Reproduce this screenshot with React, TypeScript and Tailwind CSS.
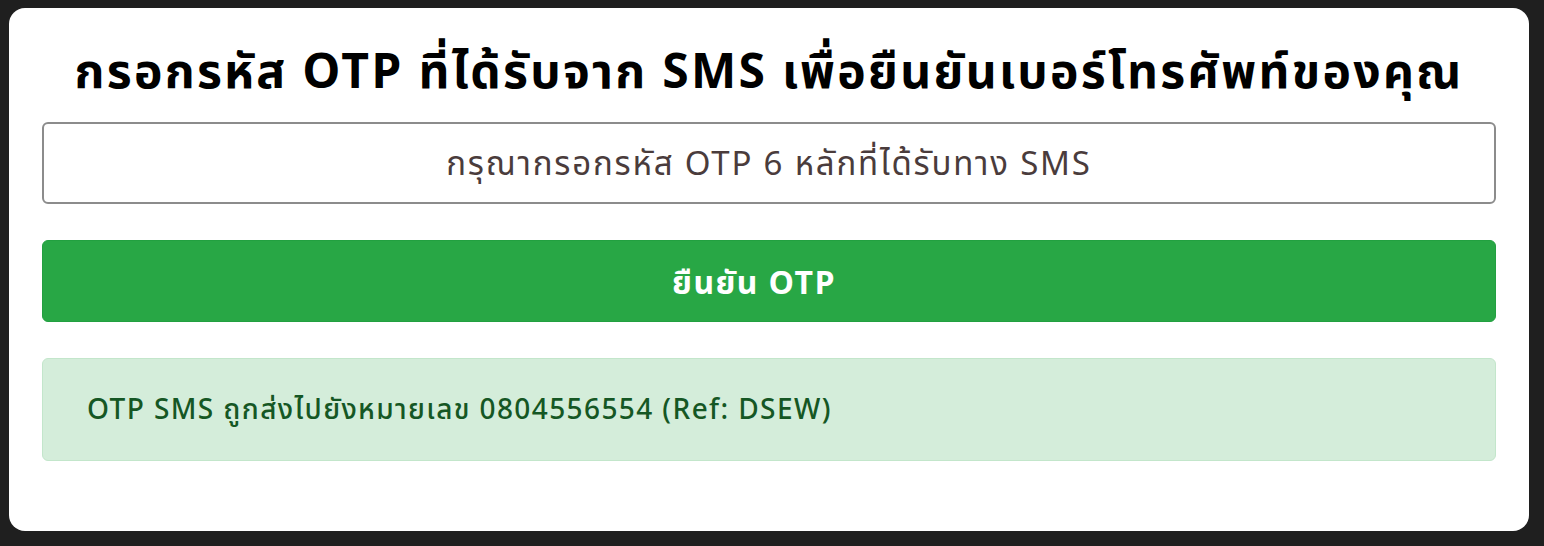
export default function App() {
    return (
        <div className="h-[546px] w-[1544px] bg-[#1f1f1f] pl-[9px] pr-[15px] pt-[8px] pb-[15px] font-['Noto_Sans_Thai','Noto_Sans',sans-serif]">
            <div className="flex h-full flex-col rounded-[16px] bg-white px-[33px] pt-[29px]">
                <h1 className="mb-[3px] text-center text-[48px] font-bold leading-[74px] tracking-[2.3px] text-black">
                    กรอกรหัส OTP ที่ได้รับจาก SMS เพื่อยืนยันเบอร์โทรศัพท์ของคุณ
                </h1>
                <input
                    className="mt-[8px] h-[82px] w-full rounded-[6px] border-2 border-[#8c8c8c] bg-white pt-[4px] text-center text-[33px] tracking-[1.8px] text-[#4a3c3c] outline-none placeholder:text-[#4a3c3c]"
                    placeholder="กรุณากรอกรหัส OTP 6 หลักที่ได้รับทาง SMS"
                />
                <button className="mt-[36px] h-[82px] w-full rounded-[6px] border border-[#22a040] bg-[#28a745] pt-[6px] pr-[30px] text-[32px] font-bold tracking-[1.4px] text-white">
                    ยืนยัน OTP
                </button>
                <div className="mt-[36px] flex h-[103px] items-center rounded-[6px] border border-[#c3e6cb] bg-[#d4edda] pl-[44px] pt-[2px] text-[28px] font-medium tracking-[1.4px] text-[#155724]">
                    OTP SMS ถูกส่งไปยังหมายเลข 0804556554 (Ref: DSEW)
                </div>
            </div>
        </div>
    )
}
